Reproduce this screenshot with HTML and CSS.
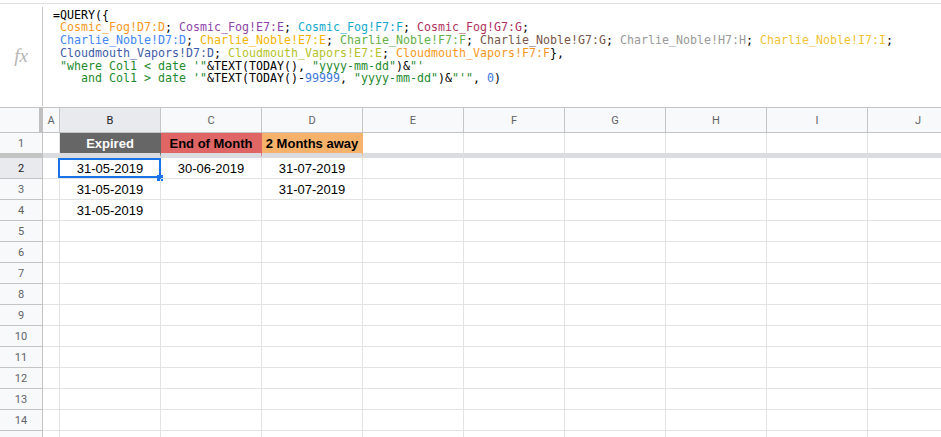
FILE: index.html
```html
<!DOCTYPE html>
<html>
<head>
<meta charset="utf-8">
<link rel="stylesheet" href="styles.css">
</head>
<body>
<div class="fbar">
  <div class="fx">fx</div>
  <div class="divider"></div>
  <div class="formula"><span class="k">=QUERY({</span>
 <span class="o1">Cosmic_Fog!D7:D</span>; <span class="o2">Cosmic_Fog!E7:E</span>; <span class="o3">Cosmic_Fog!F7:F</span>; <span class="o4">Cosmic_Fog!G7:G</span>;
 <span class="o5">Charlie_Noble!D7:D</span>; <span class="o6">Charlie_Noble!E7:E</span>; <span class="o7">Charlie_Noble!F7:F</span>; <span class="o8">Charlie_Noble!G7:G</span>; <span class="o9">Charlie_Noble!H7:H</span>; <span class="o10">Charlie_Noble!I7:I</span>;
 <span class="o11">Cloudmouth_Vapors!D7:D</span>; <span class="o12">Cloudmouth_Vapors!E7:E</span>; <span class="o1">Cloudmouth_Vapors!F7:F</span>},
 <span class="s">"where Col1 &lt; date '"</span>&amp;TEXT(TODAY(), <span class="s">"yyyy-mm-dd"</span>)&amp;<span class="s">"'
    and Col1 &gt; date '"</span>&amp;TEXT(TODAY()-<span class="n">99999</span>, <span class="s">"yyyy-mm-dd"</span>)&amp;<span class="s">"'"</span>, <span class="n">0</span>)</div>
</div>
<div class="sheet">
  <div class="row hdr">
    <div class="corner"></div>
    <div class="ch colA">A</div>
    <div class="ch sel">B</div>
    <div class="ch">C</div>
    <div class="ch">D</div>
    <div class="ch">E</div>
    <div class="ch">F</div>
    <div class="ch">G</div>
    <div class="ch">H</div>
    <div class="ch">I</div>
    <div class="ch">J</div>
  </div>
  <div class="row frozen">
    <div class="rh">1</div>
    <div class="c colA"></div>
    <div class="c bold expired">Expired</div>
    <div class="c bold eom">End of Month</div>
    <div class="c bold two">2 Months away</div>
    <div class="c"></div><div class="c"></div><div class="c"></div><div class="c"></div><div class="c"></div><div class="c"></div>
  </div>
  <div class="row">
    <div class="rh selrow">2</div>
    <div class="c colA"></div>
    <div class="c active">31-05-2019<div class="selbox"></div><div class="handle"></div></div>
    <div class="c">30-06-2019</div>
    <div class="c">31-07-2019</div>
    <div class="c"></div><div class="c"></div><div class="c"></div><div class="c"></div><div class="c"></div><div class="c"></div>
  </div>
  <div class="row">
    <div class="rh">3</div>
    <div class="c colA"></div>
    <div class="c">31-05-2019</div>
    <div class="c"></div>
    <div class="c">31-07-2019</div>
    <div class="c"></div><div class="c"></div><div class="c"></div><div class="c"></div><div class="c"></div><div class="c"></div>
  </div>
  <div class="row">
    <div class="rh">4</div>
    <div class="c colA"></div>
    <div class="c">31-05-2019</div>
    <div class="c"></div><div class="c"></div><div class="c"></div><div class="c"></div><div class="c"></div><div class="c"></div><div class="c"></div><div class="c"></div>
  </div>
  <div class="row"><div class="rh">5</div><div class="c colA"></div><div class="c"></div><div class="c"></div><div class="c"></div><div class="c"></div><div class="c"></div><div class="c"></div><div class="c"></div><div class="c"></div><div class="c"></div></div>
  <div class="row"><div class="rh">6</div><div class="c colA"></div><div class="c"></div><div class="c"></div><div class="c"></div><div class="c"></div><div class="c"></div><div class="c"></div><div class="c"></div><div class="c"></div><div class="c"></div></div>
  <div class="row"><div class="rh">7</div><div class="c colA"></div><div class="c"></div><div class="c"></div><div class="c"></div><div class="c"></div><div class="c"></div><div class="c"></div><div class="c"></div><div class="c"></div><div class="c"></div></div>
  <div class="row"><div class="rh">8</div><div class="c colA"></div><div class="c"></div><div class="c"></div><div class="c"></div><div class="c"></div><div class="c"></div><div class="c"></div><div class="c"></div><div class="c"></div><div class="c"></div></div>
  <div class="row"><div class="rh">9</div><div class="c colA"></div><div class="c"></div><div class="c"></div><div class="c"></div><div class="c"></div><div class="c"></div><div class="c"></div><div class="c"></div><div class="c"></div><div class="c"></div></div>
  <div class="row"><div class="rh">10</div><div class="c colA"></div><div class="c"></div><div class="c"></div><div class="c"></div><div class="c"></div><div class="c"></div><div class="c"></div><div class="c"></div><div class="c"></div><div class="c"></div></div>
  <div class="row"><div class="rh">11</div><div class="c colA"></div><div class="c"></div><div class="c"></div><div class="c"></div><div class="c"></div><div class="c"></div><div class="c"></div><div class="c"></div><div class="c"></div><div class="c"></div></div>
  <div class="row"><div class="rh">12</div><div class="c colA"></div><div class="c"></div><div class="c"></div><div class="c"></div><div class="c"></div><div class="c"></div><div class="c"></div><div class="c"></div><div class="c"></div><div class="c"></div></div>
  <div class="row"><div class="rh">13</div><div class="c colA"></div><div class="c"></div><div class="c"></div><div class="c"></div><div class="c"></div><div class="c"></div><div class="c"></div><div class="c"></div><div class="c"></div><div class="c"></div></div>
  <div class="row"><div class="rh">14</div><div class="c colA"></div><div class="c"></div><div class="c"></div><div class="c"></div><div class="c"></div><div class="c"></div><div class="c"></div><div class="c"></div><div class="c"></div><div class="c"></div></div>
  <div class="row"><div class="rh"></div><div class="c colA"></div><div class="c"></div><div class="c"></div><div class="c"></div><div class="c"></div><div class="c"></div><div class="c"></div><div class="c"></div><div class="c"></div><div class="c"></div></div>
</div>
</body>
</html>
```
FILE: styles.css
```css
* { box-sizing: border-box; }
html, body {
  margin: 0;
  padding: 0;
  background: #fff;
  overflow: hidden;
  width: 941px;
  height: 437px;
  font-family: "Liberation Sans", Arial, sans-serif;
}

/* formula bar */
.fbar {
  margin-top: 3px;
  height: 105px;
  border-top: 1px solid #e0e0e0;
  border-bottom: 1px solid #c4c4c4;
  display: flex;
}
.fx {
  width: 42px;
  flex: none;
  display: flex;
  align-items: center;
  justify-content: center;
  padding-top: 1px;
  font-family: "Liberation Serif", "Times New Roman", serif;
  font-style: italic;
  font-size: 19px;
  color: #b4b4b4;
}
.divider {
  width: 1px;
  flex: none;
  background: #c7c7c7;
  margin: 3px 0 1px 0;
}
.formula {
  padding: 4.5px 0 0 10px;
  font-family: "DejaVu Sans Mono", "Liberation Mono", monospace;
  font-size: 11.63px;
  line-height: 12.8px;
  white-space: pre;
  color: #000;
}
.o1 { color: #f7981d; }
.o2 { color: #8e44a8; }
.o3 { color: #11a9cc; }
.o4 { color: #b0315e; }
.o5 { color: #4285f4; }
.o6 { color: #f4b400; }
.o7 { color: #65b045; }
.o8 { color: #795548; }
.o9 { color: #999999; }
.o10 { color: #f1c232; }
.o11 { color: #3f5ca9; }
.o12 { color: #b5c22b; }
.s { color: #1e8a2e; }
.n { color: #3c78d8; }

/* sheet grid */
.sheet { width: 969px; }
.row {
  display: flex;
  height: 21px;
}
.row > div {
  flex: none;
  width: 101px;
  border-right: 1px solid #e2e3e3;
  border-bottom: 1px solid #e2e3e3;
  display: flex;
  align-items: center;
  justify-content: center;
  font-size: 13px;
  color: #000;
  position: relative;
}
.row > .colA { width: 17px; }

.hdr { height: 25px; }
.hdr > div {
  background: #f8f9fa;
  border-right-color: #c4c4c4;
  border-bottom-color: #c4c4c4;
  font-family: Roboto, Arial, sans-serif;
  font-size: 11px;
  color: #5f6368;
  padding-top: 1px;
}
.hdr > .corner {
  width: 43px;
  border-right: 4px solid #c0c0c0;
}
.hdr > .sel {
  background: #e8eaed;
  color: #202124;
}

.row > .rh {
  width: 43px;
  background: #f8f9fa;
  border-right-color: #c4c4c4;
  border-bottom-color: #c4c4c4;
  font-family: Roboto, Arial, sans-serif;
  font-size: 11px;
  color: #5f6368;
}
.row > .selrow {
  background: #e8eaed;
  color: #202124;
}

.frozen { height: 25px; }
.frozen > div { border-bottom: 5px solid #dadce0; }
.frozen > .rh { border-bottom: 5px solid #c4c4c4; }

.bold { font-weight: bold; }
.row > .expired { background: #666666; color: #fff; border-right-color: #666666; }
.row > .eom { background: #e06666; border-right-color: #e06666; }
.row > .two { background: #f6b26b; border-right-color: #f6b26b; }

.selbox {
  position: absolute;
  left: -2px;
  top: 0;
  width: 103px;
  height: 20px;
  border: 2px solid #1a73e8;
}
.handle {
  position: absolute;
  left: 97px;
  top: 17px;
  width: 6px;
  height: 6px;
  background: #1a73e8;
}
```
